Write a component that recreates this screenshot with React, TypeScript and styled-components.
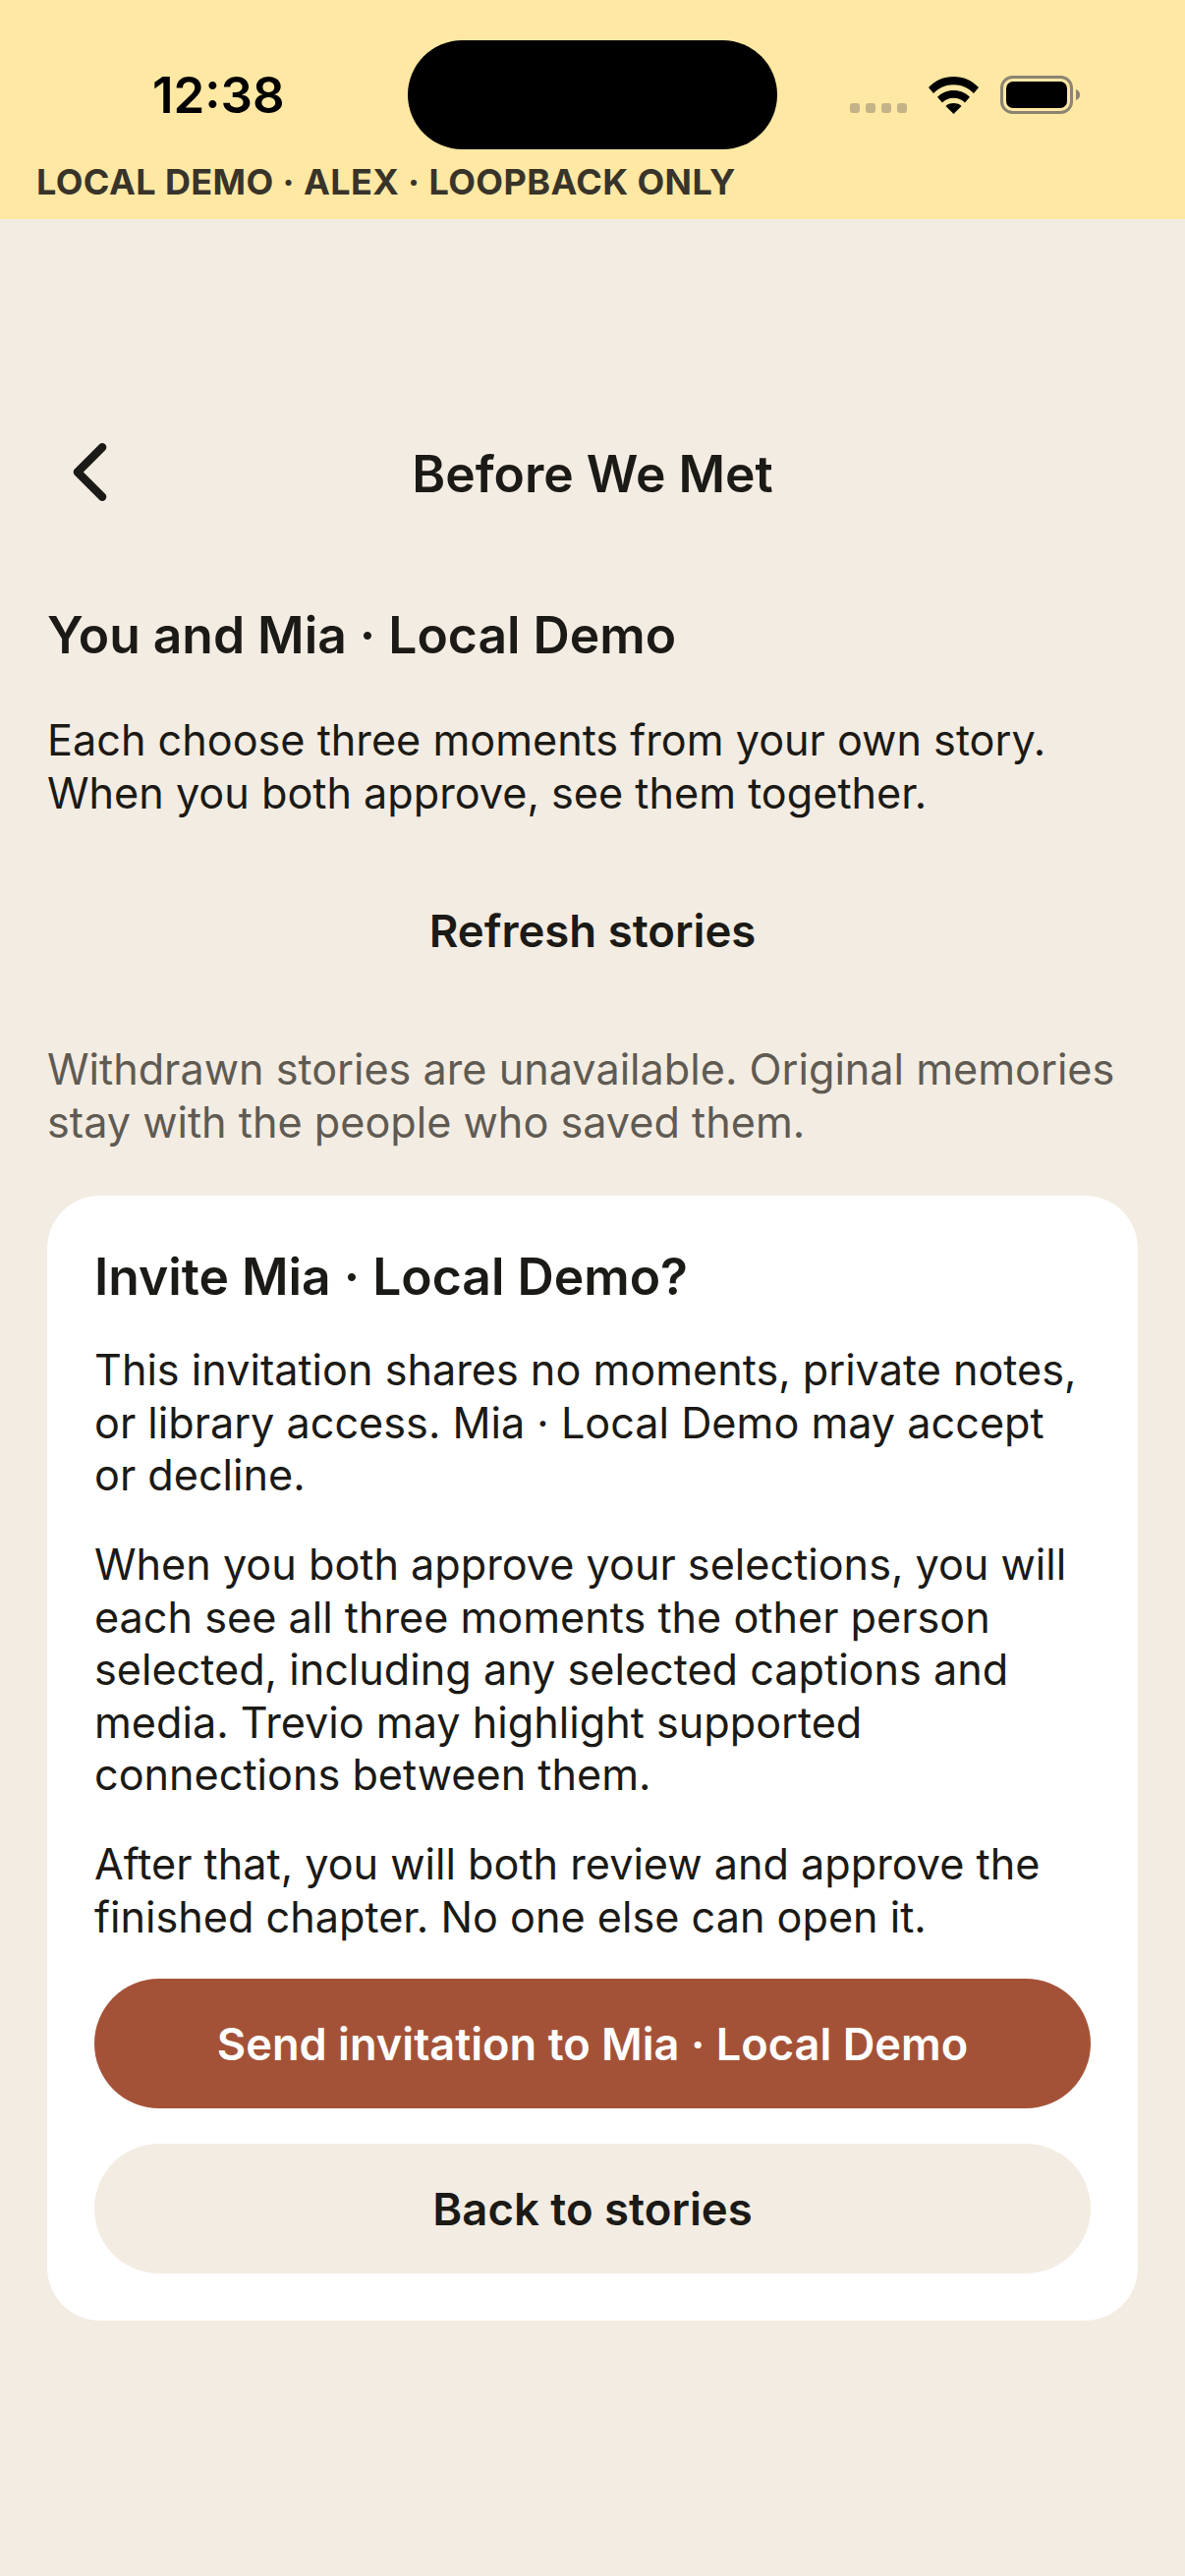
import styled, { createGlobalStyle } from 'styled-components'
import { ChevronLeft } from 'lucide-react'

const GlobalStyle = createGlobalStyle`
  html, body {
    margin: 0;
    padding: 0;
    background: #f3ece2;
  }
  * {
    box-sizing: border-box;
  }
`

const Page = styled.div`
  width: 1206px;
  height: 2622px;
  overflow: hidden;
  background: #f3ece2;
  color: #1b1a16;
  font-family: Inter, 'Liberation Sans', sans-serif;
`

const StatusArea = styled.header`
  height: 223px;
  background: #ffe8a3;
  padding: 41px 37px 0;
`

const StatusRow = styled.div`
  height: 111px;
  display: flex;
  align-items: center;
`

const Time = styled.div`
  width: 260px;
  margin-left: 118px;
  font-size: 51px;
  font-weight: 600;
  color: #000;
`

const Island = styled.div`
  width: 376px;
  height: 111px;
  border-radius: 56px;
  background: #000;
`

const StatusIcons = styled.div`
  margin-left: 74px;
  display: flex;
  align-items: center;
  gap: 22px;
`

const CellDots = styled.div`
  display: flex;
  gap: 6px;
  margin-top: 27px;
`

const CellDot = styled.span`
  width: 10px;
  height: 10px;
  border-radius: 3px;
  background: #c4b388;
`

const BannerText = styled.div`
  margin-top: 12px;
  font-size: 36px;
  font-weight: 700;
  line-height: 42px;
  letter-spacing: 0.4px;
  color: #38342a;
  white-space: nowrap;
`

const Content = styled.main`
  padding: 0 48px;
`

const NavBar = styled.nav`
  margin-top: 212px;
  height: 94px;
  display: flex;
  align-items: center;
  justify-content: center;
  position: relative;
`

const BackButton = styled.div`
  position: absolute;
  left: -7px;
  top: -5px;
  width: 101px;
  height: 101px;
`

const NavTitle = styled.h1`
  margin: 0;
  font-size: 51.6px;
  font-weight: 600;
  line-height: 64px;
`

const Heading = styled.h2`
  margin: 85px 0 0;
  font-size: 51.6px;
  font-weight: 600;
  line-height: 64px;
`

const Body = styled.p<{ $muted?: boolean }>`
  margin: 0;
  font-size: 43.2px;
  line-height: 53.5px;
  color: ${({ $muted }) => ($muted ? '#5f5b53' : '#1b1a16')};
`

const Intro = styled(Body)`
  margin-top: 49px;
`

const Refresh = styled.div`
  margin-top: 84px;
  text-align: center;
  font-size: 45.5px;
  font-weight: 600;
  line-height: 60px;
`

const Notice = styled(Body)`
  margin-top: 84px;
`

const Card = styled.section`
  margin-top: 48px;
  background: #fff;
  border-radius: 54px;
  padding: 49px 48px 48px;
  display: flex;
  flex-direction: column;
`

const CardTitle = styled.h3`
  margin: 0;
  font-size: 51.6px;
  font-weight: 600;
  line-height: 66px;
`

const CardText = styled(Body)`
  margin-top: 37.5px;

  ${CardTitle} + & {
    margin-top: 36px;
  }
`

const Button = styled.button<{ $primary?: boolean }>`
  width: 100%;
  height: 132px;
  border: 0;
  border-radius: 66px;
  font-family: inherit;
  font-size: ${({ $primary }) => ($primary ? '45.2px' : '45.5px')};
  font-weight: 600;
  background: ${({ $primary }) => ($primary ? '#a45237' : '#f3ece2')};
  color: ${({ $primary }) => ($primary ? '#fff' : '#1b1a16')};
  margin-top: 36px;
`

export default function App() {
  return (
    <Page>
      <GlobalStyle />
      <StatusArea>
        <StatusRow>
          <Time>12:38</Time>
          <Island />
          <StatusIcons>
            <CellDots>
              {[0, 1, 2, 3].map((i) => (
                <CellDot key={i} />
              ))}
            </CellDots>
            <svg width="51" height="38" viewBox="0 0 51 38">
              <path
                fill="#000"
                d="M25.500 0C15.500 0 7 3.700 0 11l5 6c5.600-5.400 12.500-8.700 20.500-8.700S40.400 11.600 46 17l5-6C44 3.700 35.500 0 25.500 0z"
              />
              <path
                fill="#000"
                d="M25.500 14c-6.500 0-12 2.400-16.500 6.700l5 5.800c3-3 6.900-4.800 11.500-4.800s8.500 1.800 11.500 4.800l5-5.800C37.500 16.400 32 14 25.500 14z"
              />
              <path fill="#000" d="M25.500 27c-3.400 0-6.500 1.200-8 3l8 8 8-8c-1.500-1.800-4.600-3-8-3z" />
            </svg>
            <svg width="82" height="39" viewBox="0 0 82 39">
              <rect x="1.500" y="1.500" width="71" height="36" rx="11" fill="none" stroke="#8b8472" strokeWidth="3" />
              <rect x="6" y="6" width="62" height="27" rx="7" fill="#000" />
              <path fill="#8b8472" d="M77 14c3 1 4 3 4 5.500S80 24 77 25z" />
            </svg>
          </StatusIcons>
        </StatusRow>
        <BannerText>LOCAL DEMO · ALEX · LOOPBACK ONLY</BannerText>
      </StatusArea>
      <Content>
        <NavBar>
          <BackButton>
            <ChevronLeft size={101} strokeWidth={2} color="#1b1a16" />
          </BackButton>
          <NavTitle>Before We Met</NavTitle>
        </NavBar>
        <Heading>You and Mia · Local Demo</Heading>
        <Intro>
          Each choose three moments from your own story.
          <br />
          When you both approve, see them together.
        </Intro>
        <Refresh>Refresh stories</Refresh>
        <Notice $muted>
          Withdrawn stories are unavailable. Original memories
          <br />
          stay with the people who saved them.
        </Notice>
        <Card>
          <CardTitle>Invite Mia · Local Demo?</CardTitle>
          <CardText>
            This invitation shares no moments, private notes,
            <br />
            or library access. Mia · Local Demo may accept
            <br />
            or decline.
          </CardText>
          <CardText>
            When you both approve your selections, you will
            <br />
            each see all three moments the other person
            <br />
            selected, including any selected captions and
            <br />
            media. Trevio may highlight supported
            <br />
            connections between them.
          </CardText>
          <CardText>
            After that, you will both review and approve the
            <br />
            finished chapter. No one else can open it.
          </CardText>
          <Button $primary>Send invitation to Mia · Local Demo</Button>
          <Button>Back to stories</Button>
        </Card>
      </Content>
    </Page>
  )
}
